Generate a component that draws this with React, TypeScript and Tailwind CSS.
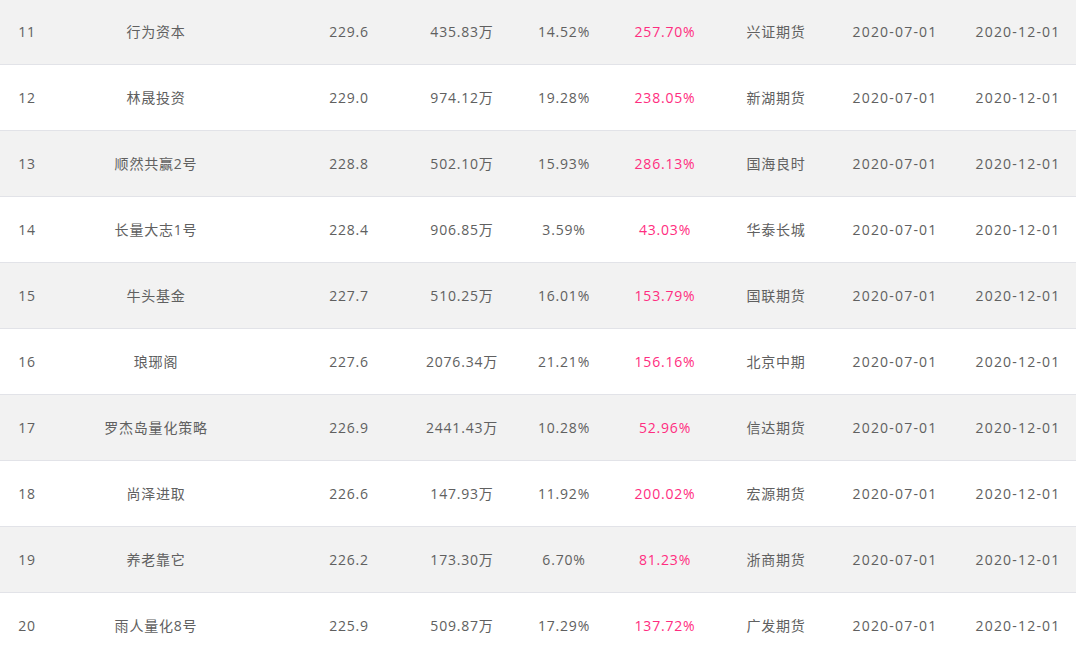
import React from "react";

type Row = [string, string, string, string, string, string, string, string, string];

const rows: Row[] = [
  ["11", "行为资本", "229.6", "435.83万", "14.52%", "257.70%", "兴证期货", "2020-07-01", "2020-12-01"],
  ["12", "林晟投资", "229.0", "974.12万", "19.28%", "238.05%", "新湖期货", "2020-07-01", "2020-12-01"],
  ["13", "顺然共赢2号", "228.8", "502.10万", "15.93%", "286.13%", "国海良时", "2020-07-01", "2020-12-01"],
  ["14", "长量大志1号", "228.4", "906.85万", "3.59%", "43.03%", "华泰长城", "2020-07-01", "2020-12-01"],
  ["15", "牛头基金", "227.7", "510.25万", "16.01%", "153.79%", "国联期货", "2020-07-01", "2020-12-01"],
  ["16", "琅琊阁", "227.6", "2076.34万", "21.21%", "156.16%", "北京中期", "2020-07-01", "2020-12-01"],
  ["17", "罗杰岛量化策略", "226.9", "2441.43万", "10.28%", "52.96%", "信达期货", "2020-07-01", "2020-12-01"],
  ["18", "尚泽进取", "226.6", "147.93万", "11.92%", "200.02%", "宏源期货", "2020-07-01", "2020-12-01"],
  ["19", "养老靠它", "226.2", "173.30万", "6.70%", "81.23%", "浙商期货", "2020-07-01", "2020-12-01"],
  ["20", "雨人量化8号", "225.9", "509.87万", "17.29%", "137.72%", "广发期货", "2020-07-01", "2020-12-01"],
];

const cellCls = [
  "w-[54px] tracking-[0.8px]",
  "ml-[32px] w-[140px] tracking-[0.8px]",
  "ml-[83px] w-[80px] tracking-[0.8px]",
  "ml-[28px] w-[90px] tracking-[0.8px]",
  "ml-[22px] w-[70px] tracking-[0.8px]",
  "ml-[26px] w-[80px] tracking-[0.8px] text-[#ff2d80]",
  "ml-[31px] w-[80px] tracking-[0.8px]",
  "ml-[29px] w-[100px] tracking-[1.2px]",
  "ml-[23px] w-[100px] tracking-[1.2px]",
];

export default function App() {
  return (
    <div
      className="w-[1076px] h-[656px] overflow-hidden bg-white"
      style={{ fontFamily: '"Open Sans", "Noto Sans CJK SC", sans-serif' }}
    >
      <div className="-mt-px flex flex-col">
        {rows.map((r, i) => (
          <div
            key={r[0]}
            className={`flex h-[66px] shrink-0 items-center border-b border-[#e2e3e8] text-[14px] text-[#606060] ${
              i % 2 === 0 ? "bg-[#f2f2f2]" : "bg-white"
            }`}
          >
            {r.map((v, j) => (
              <div
                key={j}
                className={`flex shrink-0 justify-center whitespace-nowrap ${cellCls[j]}`}
              >
                {v}
              </div>
            ))}
          </div>
        ))}
      </div>
    </div>
  );
}
